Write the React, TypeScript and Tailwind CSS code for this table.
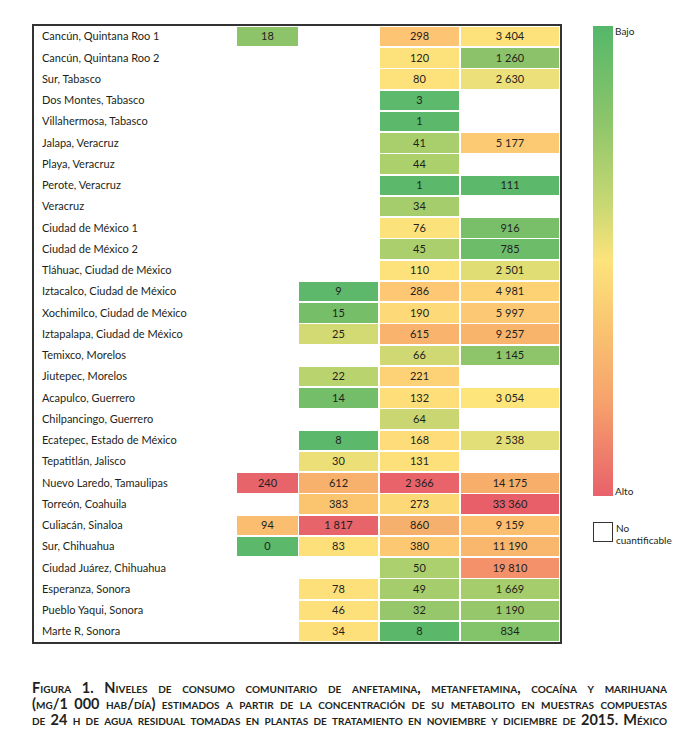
import React from "react";

type Cell = [string, string] | null;
type Row = [string, Cell, Cell, Cell, Cell];

const rows: Row[] = [
  ["Cancún, Quintana Roo 1", ["18", "#8dc46a"], null, ["298", "#fcc473"], ["3 404", "#fde27b"]],
  ["Cancún, Quintana Roo 2", null, null, ["120", "#fde27b"], ["1 260", "#8cc36a"]],
  ["Sur, Tabasco", null, null, ["80", "#fde27b"], ["2 630", "#ece07a"]],
  ["Dos Montes, Tabasco", null, null, ["3", "#5db96b"], null],
  ["Villahermosa, Tabasco", null, null, ["1", "#5cb86b"], null],
  ["Jalapa, Veracruz", null, null, ["41", "#a8cf6c"], ["5 177", "#fcca72"]],
  ["Playa, Veracruz", null, null, ["44", "#abd06c"], null],
  ["Perote, Veracruz", null, null, ["1", "#5cb86b"], ["111", "#5cb86b"]],
  ["Veracruz", null, null, ["34", "#a5cd6b"], null],
  ["Ciudad de México 1", null, null, ["76", "#fbe27b"], ["916", "#79bf6a"]],
  ["Ciudad de México 2", null, null, ["45", "#aacf6c"], ["785", "#6dbc6a"]],
  ["Tláhuac, Ciudad de México", null, null, ["110", "#fde27b"], ["2 501", "#dfdd74"]],
  ["Iztacalco, Ciudad de México", null, ["9", "#5db86b"], ["286", "#fdc773"], ["4 981", "#fcd275"]],
  ["Xochimilco, Ciudad de México", null, ["15", "#77be69"], ["190", "#fdd977"], ["5 997", "#fcc873"]],
  ["Iztapalapa, Ciudad de México", null, ["25", "#d3da73"], ["615", "#f9b36d"], ["9 257", "#f9b46c"]],
  ["Temixco, Morelos", null, null, ["66", "#cfd872"], ["1 145", "#8ec46a"]],
  ["Jiutepec, Morelos", null, ["22", "#b9d36f"], ["221", "#fdd176"], null],
  ["Acapulco, Guerrero", null, ["14", "#74bd69"], ["132", "#fdde79"], ["3 054", "#fde47b"]],
  ["Chilpancingo, Guerrero", null, null, ["64", "#c9d671"], null],
  ["Ecatepec, Estado de México", null, ["8", "#5cb86b"], ["168", "#fddc79"], ["2 538", "#e3df78"]],
  ["Tepatitlán, Jalisco", null, ["30", "#eddf77"], ["131", "#fde07a"], null],
  ["Nuevo Laredo, Tamaulipas", ["240", "#e8646b"], ["612", "#f8b16c"], ["2 366", "#e9636b"], ["14 175", "#f7ae6b"]],
  ["Torreón, Coahuila", null, ["383", "#fbc570"], ["273", "#fdd877"], ["33 360", "#e85f69"]],
  ["Culiacán, Sinaloa", ["94", "#fbbd6f"], ["1 817", "#e8646b"], ["860", "#f6b06d"], ["9 159", "#fbbf6f"]],
  ["Sur, Chihuahua", ["0", "#5cb86b"], ["83", "#fde07a"], ["380", "#fcc872"], ["11 190", "#f9b66d"]],
  ["Ciudad Juárez, Chihuahua", null, null, ["50", "#acd06d"], ["19 810", "#f4906a"]],
  ["Esperanza, Sonora", null, ["78", "#fde07a"], ["49", "#a6cd6b"], ["1 669", "#a5cd6b"]],
  ["Pueblo Yaqui, Sonora", null, ["46", "#fde07a"], ["32", "#97c76b"], ["1 190", "#96c76a"]],
  ["Marte R, Sonora", null, ["34", "#fde07a"], ["8", "#5bb86a"], ["834", "#83c36a"]],
];

function DataCell({ cell, w }: { cell: Cell; w: string }) {
  return (
    <div className={`${w} h-full py-[0.9px] shrink-0`}>
      {cell ? (
        <div
          className="h-full flex items-center justify-center text-[11px] text-[#231f20]"
          style={{ backgroundColor: cell[1] }}
        >
          {cell[0]}
        </div>
      ) : null}
    </div>
  );
}

export default function App() {
  const font = { fontFamily: "Lato, 'Open Sans', sans-serif" };
  return (
    <div className="w-[700px] h-[730px] bg-white relative" style={font}>
      <div className="flex pt-[24px]">
        <div className="ml-[32px] w-[530px] border-2 border-[#333] flex flex-col">
          {rows.map((r, i) => (
            <div key={i} className="flex h-[21.25px] items-stretch">
              <div className="w-[203px] shrink-0 pl-[8px] flex items-center text-[11px] text-[#231f20] whitespace-nowrap">
                {r[0]}
              </div>
              <DataCell cell={r[1]} w="w-[61px]" />
              <div className="w-[1px] shrink-0" />
              <DataCell cell={r[2]} w="w-[79px]" />
              <div className="w-[2px] shrink-0" />
              <DataCell cell={r[3]} w="w-[79px]" />
              <div className="w-[2px] shrink-0" />
              <DataCell cell={r[4]} w="w-[98px]" />
            </div>
          ))}
        </div>
        <div className="ml-[31px] flex flex-col pt-[2px]">
          <div className="flex h-[470px]">
            <div
              className="w-[20px] h-full"
              style={{
                background:
                  "linear-gradient(to bottom, #55b76a 0%, #8cc56a 20%, #c8d873 38%, #fde37b 50%, #f9c270 65%, #f6a26c 80%, #e8616b 100%)",
              }}
            />
            <div className="flex flex-col justify-between pl-[2px] text-[10px] text-[#231f20] leading-[12px]">
              <span className="-mt-[1px]">Bajo</span>
              <span className="-mb-[1px]">Alto</span>
            </div>
          </div>
          <div className="flex mt-[26px]">
            <div className="w-[20px] h-[20px] border-[1.5px] border-[#333] bg-white" />
            <div className="pl-[3px] text-[10px] leading-[12px] text-[#231f20]">
              <div>No</div>
              <div>cuantificable</div>
            </div>
          </div>
        </div>
      </div>
      <div className="ml-[32px] w-[635px] mt-[36px] font-bold text-[14.5px] leading-[16px] text-[#231f20] [font-variant:small-caps] whitespace-nowrap">
        <div className="text-justify [text-align-last:justify]">
          Figura 1. Niveles de consumo comunitario de anfetamina, metanfetamina, cocaína y marihuana
        </div>
        <div className="text-justify [text-align-last:justify]">
          (mg/1 000 hab/día) estimados a partir de la concentración de su metabolito en muestras compuestas
        </div>
        <div className="text-justify [text-align-last:justify]">
          de 24 h de agua residual tomadas en plantas de tratamiento en noviembre y diciembre de 2015. México
        </div>
      </div>
    </div>
  );
}
